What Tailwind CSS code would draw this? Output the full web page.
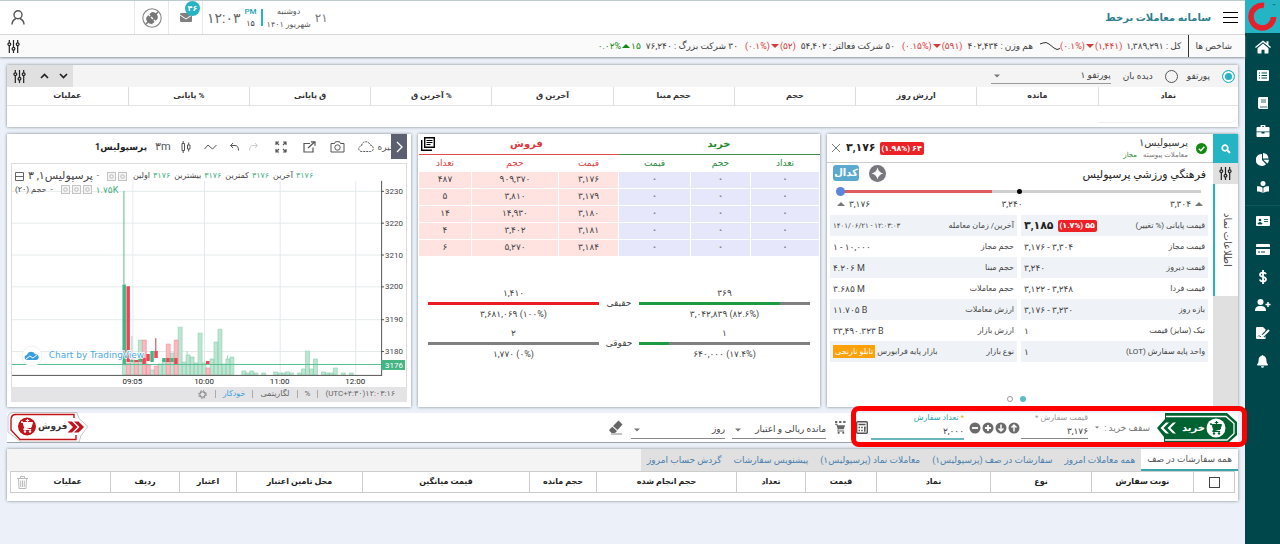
<!DOCTYPE html>
<html lang="fa" dir="rtl">
<head>
<meta charset="utf-8">
<title>سامانه معاملات برخط</title>
<script src="https://cdn.jsdelivr.net/npm/@tailwindcss/browser@4"></script>
</head>
<body class="min-h-screen flex bg-[#ecf1f9] text-[#444] text-[10px] leading-4 overflow-hidden [font-family:Roboto,'DejaVu_Sans',sans-serif]">

<svg class="hidden">
  <symbol id="sliders" viewBox="0 0 14 14"><g fill="none" stroke="currentColor" stroke-width="1.3"><path d="M2.5 0v3M2.5 6v8M7 0v8M7 11v3M11.500 0v3M11.500 6v8"/><circle cx="2.500" cy="4.500" r="1.500"/><circle cx="7" cy="9.500" r="1.500"/><circle cx="11.500" cy="4.500" r="1.500"/></g></symbol>
  <symbol id="down" viewBox="0 0 8 4"><path d="M0 0h8L4 4z" fill="currentColor"/></symbol>
  <symbol id="up" viewBox="0 0 8 4"><path d="M0 4h8L4 0z" fill="currentColor"/></symbol>
  <symbol id="cart" viewBox="0 0 14 14"><path d="M1 3h2l1.500 5.500h6.500l1.500-5H3.500zM4.500 8.500l-.8 2h7.500" fill="currentColor" stroke="currentColor" stroke-width="1"/><circle cx="5" cy="12.500" r="1.200" fill="currentColor"/><circle cx="10" cy="12.500" r="1.200" fill="currentColor"/><path d="M7.500 0v3M5.800 1.500h3.400" fill="none" stroke="currentColor" stroke-width="1.200"/></symbol>
  <symbol id="chip" viewBox="0 0 9 9"><rect x=".5" y=".5" width="8" height="8" fill="#f4f4f4" stroke="#c4c4c4"/><circle cx="4.500" cy="4.500" r="1.800" fill="none" stroke="#bbb"/></symbol>
</svg>

<nav aria-label="منوی اصلی" class="w-[35px] shrink-0 bg-[#00474c] text-white flex flex-col items-center">
  <a href="#" aria-label="خانه کارگزاری" class="w-full h-[33px] bg-[#25b4c4] flex items-center justify-center">
    <svg class="size-[29px]" viewBox="0 0 29 29"><path d="M16 3.500A11.300 11.300 0 1 0 25.600 15" fill="none" stroke="#e5202b" stroke-width="5.500"/><path d="M24 2h4l-2 1.500z" fill="#0b7a86"/></svg>
  </a>
  <a href="#" aria-label="خانه" class="h-[28px] flex items-center"><svg class="w-4 h-[14px]" viewBox="0 0 16 14" fill="currentColor"><path d="M8 3.600 2.500 8.200V13c0 .3.200.5.500.5h3.500V9.700h3v3.800H13c.3 0 .5-.2.500-.5V8.200z"/><path d="M8 .5 0 7l.9 1.100L8 2.300l7.100 5.800L16 7l-2.500-2.100V1.300h-2v2z"/></svg></a>
  <a href="#" aria-label="فهرست" class="h-[28px] flex items-center"><svg class="w-3 h-[11px]" viewBox="0 0 12 11"><rect width="12" height="11" rx="1" fill="#fff"/><path d="M2 3h1M2 5.500h1M2 8h1M4.500 3H10M4.500 5.500H10M4.500 8H10" stroke="#00474c"/></svg></a>
  <a href="#" aria-label="دفتر" class="h-[28px] flex items-center"><svg class="w-3 h-3" viewBox="0 0 12 12"><path d="M2.500 0H11v9.500l-.3.500.3 2H2.500A1.800 1.800 0 0 1 1 10V1.700A1.700 1.700 0 0 1 2.500 0z" fill="#fff"/><path d="M3 10h7M4 3h5M4 5h5" stroke="#00474c" stroke-width=".8"/></svg></a>
  <a href="#" aria-label="پرتفوی" class="h-[28px] flex items-center"><svg class="w-[14px] h-3" viewBox="0 0 14 12"><path d="M4.500 2V.8c0-.4.300-.8.800-.8h3.400c.5 0 .8.400.8.800V2h3c.6 0 1 .5 1 1v3.500H.5V3c0-.5.400-1 1-1zM6 2h2V1.300H6zM.5 7.300H5.500V8.500h3V7.300h5V11c0 .6-.4 1-1 1h-11c-.6 0-1-.4-1-1z" fill="#fff" fill-rule="evenodd"/></svg></a>
  <a href="#" aria-label="نمودار" class="h-[28px] flex items-center"><svg class="size-[13px]" viewBox="0 0 13 13" fill="#fff"><path d="M6 1v6l4 4.200A6 6 0 1 1 6 1z"/><path d="M7 0a6 6 0 0 1 5.500 5.500H7zM7.300 6.800H13a6 6 0 0 1-1.700 3.800z"/></svg></a>
  <a href="#" aria-label="آموزش" class="h-[28px] flex items-center"><svg class="size-3" viewBox="0 0 12 12" fill="#fff"><circle cx="6" cy="2.500" r="2.500"/><path d="M0 5.200c2.200 0 4 .4 5.600 1.500V12C4 11 2.200 10.600 0 10.600zM12 5.200c-2.200 0-4 .4-5.600 1.500V12C8 11 9.800 10.600 12 10.600z"/></svg></a>
  <hr class="w-full border-[#0b5a5f] mt-1 mb-px">
  <a href="#" aria-label="کارت شناسایی" class="h-[28px] flex items-center"><svg class="w-[14px] h-[10px]" viewBox="0 0 14 10"><rect width="14" height="10" rx="1" fill="#fff"/><circle cx="4" cy="4" r="1.300" fill="#00474c"/><path d="M2 8c0-2 4-2 4 0zM8 3.500h4M8 5.500h4" fill="#00474c" stroke="#00474c" stroke-width=".8"/></svg></a>
  <a href="#" aria-label="پرداخت" class="h-[28px] flex items-center"><svg class="w-[14px] h-[11px]" viewBox="0 0 14 11"><rect width="14" height="11" rx="1" fill="#fff"/><path d="M0 4h14" stroke="#00474c" stroke-width="2"/><path d="M2 8h2M5 8h4" stroke="#00474c"/></svg></a>
  <a href="#" aria-label="مالی" class="h-[28px] flex items-center"><svg class="w-2 h-[14px]" viewBox="0 0 8 14" fill="none" stroke="#fff" stroke-width="1.800"><path d="M4 0v14M7 4.200C6.500 3 5.500 2.600 4 2.600 2.300 2.600 1 3.300 1 4.700 1 7.700 7 6 7 9.200c0 1.500-1.300 2.200-3 2.200S1.200 10.800.8 9.500"/></svg></a>
  <a href="#" aria-label="کاربر جدید" class="h-[28px] flex items-center"><svg class="w-4 h-3" viewBox="0 0 16 12" fill="#fff"><circle cx="5.500" cy="3" r="3"/><path d="M0 12c0-3.500 1.500-5 5.500-5S11 8.500 11 12z"/><path d="M13 3v5M10.500 5.500h5" stroke="#fff" stroke-width="1.500"/></svg></a>
  <a href="#" aria-label="قرارداد" class="h-[28px] flex items-center"><svg class="w-[14px] h-3" viewBox="0 0 14 12"><path d="M1 0h6l2.500 2.500V12H1a1 1 0 0 1-1-1V1a1 1 0 0 1 1-1z" fill="#fff"/><path d="M12.800 3.200 7 9" stroke="#00474c" stroke-width="4"/><path d="M13 3 7.500 8.500 5.500 9" stroke="#fff" stroke-width="2" fill="none"/><path d="M2 9.500l1-1 1 1.200 1-.5" stroke="#00474c" fill="none" stroke-width=".8"/></svg></a>
  <a href="#" aria-label="اعلان" class="h-[28px] flex items-center"><svg class="w-[11px] h-[13px]" viewBox="0 0 11 13" fill="#fff"><path d="M5.500 0c.5 0 .8.300.8.800C8.300 1.200 9.400 2.700 9.400 5c0 2.500.6 3.300 1.400 4.200.4.500 0 1.300-.6 1.300H.8c-.6 0-1-.8-.6-1.300C1 8.300 1.600 7.500 1.600 5c0-2.300 1.100-3.800 3.100-4.200 0-.5.300-.8.800-.8zM4 11.300h3a1.500 1.500 0 0 1-3 0z"/></svg></a>
</nav>

<div class="flex-1 min-w-0 flex flex-col">

  <header class="h-[35px] bg-white border-t border-t-[#bccccc] border-b border-b-[#ddd] flex items-center ps-[7px]">
    <button type="button" aria-label="منو" class="w-[15px] h-[11px] flex flex-col justify-between"><span class="h-px w-full bg-black"></span><span class="h-px w-full bg-black"></span><span class="h-px w-full bg-black"></span></button>
    <h1 class="ms-3 text-[10px] font-bold text-[#2f7f8c]">سامانه معاملات برخط</h1>
    <div class="ms-auto flex items-center h-full whitespace-nowrap">
      <span class="text-[12px] text-[#777]">۲۱</span>
      <div class="ms-1 text-center text-[8px] leading-[13px] text-[#555]"><div>دوشنبه</div><div>شهریور ۱۴۰۱</div></div>
      <span class="w-[2px] h-[17px] bg-[#25b4c4] ms-[4px]"></span>
      <div class="ms-[4px] text-center text-[8px] leading-[12px]"><div class="text-[#1fa3b3] font-medium">PM</div><div>۱۵</div></div>
      <time class="mr-1 text-[14px] text-[#666]" dir="ltr">۱۲:۰۳</time>
      <button type="button" aria-label="پیام‌ها" class="relative ms-1 w-[35px] h-full border-x border-[#e8e8e8] flex items-center justify-center">
        <svg class="w-[12px] h-[9px]" viewBox="0 0 12 9"><rect width="12" height="9" rx="1" fill="#808080"/><path d="M0 2l6 4 6-4" stroke="#fff" fill="none"/></svg>
        <span class="absolute top-0 left-[16px] size-[15px] rounded-full bg-[#25b4c4] text-white text-[8px] leading-[15px] font-bold text-center">۴۶</span>
      </button>
      <button type="button" aria-label="اتصال" class="w-[34px] h-full border-l border-[#e8e8e8] flex items-center justify-center">
        <svg class="size-5" viewBox="0 0 20 20"><circle cx="10" cy="10" r="9.200" fill="none" stroke="#888" stroke-width="1.100"/><g transform="rotate(45 10 10)"><path d="M5.500 9.300V7.500C5.500 5 7.800 4 10 4s4.500 1 4.500 3.500v1.800zM5.500 10.700v1.800C5.500 15 7.800 16 10 16s4.500-1 4.500-3.500v-1.800z" fill="#777"/><path d="M10 4.500V1.500M10 15.500v3M8 9v2M12 9v2" stroke="#777" stroke-width="1.500"/></g></svg>
      </button>
      <button type="button" aria-label="حساب کاربری" class="ms-[109px] me-[11px]"><svg class="w-[14px] h-[15px]" viewBox="0 0 14 15" fill="none" stroke="#555" stroke-width="1.400"><circle cx="7" cy="4.800" r="4"/><path d="M1 14.500c0-3.500 1.800-5 4-6M13 14.500c0-3.500-1.800-5-4-6"/></svg></button>
    </div>
  </header>

  <section aria-label="شاخص‌ها" class="h-[22px] bg-[#fafafa] shadow-[0_1px_2px_#8a9499] flex items-center ps-[13px] pe-[7px] text-[9px] whitespace-nowrap relative">
    <span>شاخص ها</span>
    <span class="ms-[6px] w-px h-full bg-[#333]"></span>
    <span class="ms-[7px]">کل : ۱,۳۸۹,۲۹۱</span>
    <span class="mr-[4px] flex items-center text-[#d23b3b] gap-px" dir="ltr">(۰.۱%)<svg class="w-2 h-1"><use href="#down"/></svg>(۱,۴۴۱)</span>
    <svg class="w-[20px] h-[10px] shrink-0" viewBox="0 0 20 10" fill="none" stroke="#333"><path d="M0 3l3-1 3-.500 3 1.500 5 4 3 1.500 3-1"/></svg>
    <span class="ms-[7px]">هم وزن : ۴۰۲,۴۳۴</span>
    <span class="mr-[5px] flex items-center text-[#d23b3b] gap-px" dir="ltr">(۰.۱۵%)<svg class="w-2 h-1"><use href="#down"/></svg>(۵۹۱)</span>
    <span class="ms-[7px]">۵۰ شرکت فعالتر : ۵۴,۴۰۲</span>
    <span class="mr-[5px] flex items-center text-[#d23b3b] gap-px" dir="ltr">(۰.۱%)<svg class="w-2 h-1"><use href="#down"/></svg>(۵۲)</span>
    <span class="ms-[7px]">۳۰ شرکت بزرگ : ۷۶,۲۴۰</span>
    <span class="mr-[5px] flex items-center text-[#0f8a0f] gap-px" dir="ltr">۰.۰۲%<svg class="w-2 h-1"><use href="#up"/></svg>۱۵</span>
    <button type="button" aria-label="تنظیمات" class="ms-auto text-[#222]"><svg class="w-[13px] h-[13px]"><use href="#sliders"/></svg></button>
  </section>

  <main class="ps-[7px] pe-[7px] pt-2 flex flex-col">

    <section class="bg-white shadow-[0_0_3px_#7d878c] h-[62px]">
      <div class="h-[22px] bg-[#f4f4f4] flex items-center ps-[3px]">
        <label class="flex items-center text-[9px]"><input type="radio" name="src" checked class="appearance-none size-[13px] rounded-full border-[1px] border-[#25b4c4] bg-[#25b4c4] shadow-[inset_0_0_0_2px_#fff] me-3">پورتفو</label>
        <label class="ms-[9px] flex items-center text-[9px]"><input type="radio" name="src" class="appearance-none size-[13px] rounded-full border border-[#555] me-3">دیده بان</label>
        <div class="ms-[12px] relative w-[120px]">
          <select aria-label="انتخاب پورتفو" class="appearance-none block w-full h-4 border-b border-[#999] bg-transparent text-[9px] leading-[15px] outline-none"><option>پورتفو ۱</option></select>
          <svg class="absolute left-[3px] top-[6px] w-[6px] h-1 text-[#777]"><use href="#down"/></svg></div>
        <div class="ms-auto h-full w-[66px] bg-[#e0e0e0] flex items-center text-[#222]">
          <button type="button" aria-label="پایین" class="ms-[5px]"><svg class="w-[9px] h-[6px]" viewBox="0 0 9 6" fill="none" stroke="currentColor" stroke-width="1.700"><path d="M1 1l3.500 3.500L8 1"/></svg></button>
          <button type="button" aria-label="بالا" class="ms-[10px]"><svg class="w-[9px] h-[6px]" viewBox="0 0 9 6" fill="none" stroke="currentColor" stroke-width="1.700"><path d="M1 5l3.500-3.500L8 5"/></svg></button>
          <button type="button" aria-label="تنظیمات" class="ms-auto me-[6px]"><svg class="size-[13px]"><use href="#sliders"/></svg></button>
        </div>
      </div>
      <table class="w-full table-fixed text-[8px] text-[#333]">
        <colgroup><col class="w-[140px]"><col><col><col><col><col><col><col><col><col></colgroup>
        <thead><tr class="h-[18px] border-b border-[#e4e4e4] [&>th+th]:border-r [&>th+th]:border-[#ddd] [&>th]:p-0 [&>th]:leading-4">
          <th>نماد</th><th>مانده</th><th>ارزش روز</th><th>حجم</th><th>حجم مبنا</th><th>آخرین ق</th><th>% آخرین ق</th><th>ق پایانی</th><th>% پایانی</th><th>عملیات</th></tr></thead>
        <tbody><tr><td colspan="10"><div class="h-[17px] border-b border-[#eee] rounded-r-full w-[140px]"></div></td></tr></tbody>
      </table>
    </section>

    <div class="flex gap-[7px] mt-[7px] h-[273px]">

      <section class="w-[411px] shrink-0 bg-white shadow-[0_0_3px_#7d878c] flex">
        <div class="w-[25px] bg-[#e0e0e0] flex flex-col">
          <button type="button" aria-label="جستجو" class="h-[29px] bg-[#25b4c4] flex items-center justify-center"><svg class="size-[10px]" viewBox="0 0 10 10" fill="none" stroke="#fff"><circle cx="4" cy="4" r="2.800" stroke-width="1.700"/><path d="M6 6l3 3" stroke-width="2"/></svg></button>
          <button type="button" aria-label="تنظیمات" class="h-[21px] flex items-center justify-center text-[#222]"><svg class="size-[13px]"><use href="#sliders"/></svg></button>
          <button type="button" class="h-[112px] bg-white border-l-2 border-[#25b4c4] flex items-center justify-center"><span class="[writing-mode:vertical-rl] text-[10px] whitespace-nowrap">اطلاعات نماد</span></button>
        </div>
        <div class="flex-1 min-w-0 flex flex-col">
          <div class="h-[29px] border-b border-[#ccc] flex items-center ps-[6px] pe-[5px]">
            <svg class="size-[11px]" viewBox="0 0 11 11"><circle cx="5.500" cy="5.500" r="5.500" fill="#0f8a0f"/><path d="M2.800 5.700l2 2 3.500-4" fill="none" stroke="#fff" stroke-width="1.400"/></svg>
            <div class="ms-2"><div class="text-[10px] leading-[14px] text-[#333]">پرسپولیس۱</div><div class="text-[7px] leading-[10px] text-[#777] flex gap-[6px]"><span>معاملات پیوسته</span><span class="text-[#2b8a2b]">مجاز</span></div></div>
            <span class="mr-auto bg-[#ec2227] text-white font-bold text-[8px] leading-[13px] rounded-[2px] px-[2px]" dir="ltr">(۱.۹۸%) ۶۴</span>
            <strong class="ms-1 text-[11px] text-[#222]">۳,۱۷۶</strong>
            <button type="button" aria-label="بستن" class="ms-[6px]"><svg class="size-2" viewBox="0 0 8 8" stroke="#777"><path d="M0 0l8 8M8 0L0 8"/></svg></button>
          </div>
          <div class="h-[24px] flex items-center ps-[7px] pe-[6px]">
            <h2 class="text-[11px] text-[#222]">فرهنگي ورزشي پرسپوليس</h2>
            <svg class="ms-auto size-[17px] mb-1" viewBox="0 0 17 17"><circle cx="8.500" cy="8.500" r="8.500" fill="#77777d"/><path d="M8.500 2.500c.8 3.500 2.500 5.200 6 6-3.500.8-5.200 2.500-6 6-.8-3.500-2.500-5.200-6-6 3.500-.8 5.200-2.500 6-6z" fill="#fff"/></svg>
            <a href="#" class="ms-[10px] mb-1 w-[26px] h-4 rounded-[3px] bg-[#5ba9cf] text-white font-bold text-[10px] leading-[15px] text-center">کدال</a>
          </div>
          <div class="ps-[14px] pe-[12px] mt-[3px]" dir="ltr">
            <div class="relative h-[3px] bg-[#d0d0d0] flex">
              <div class="bg-[#dd5c5c]" style="width:42%"></div>
              <span class="absolute -left-[5px] -top-[3px] size-[9px] rounded-full bg-[#5b86dd]"></span>
              <span class="absolute left-[49%] -top-px size-[5px] rounded-full bg-black"></span>
            </div>
          </div>
          <div class="flex justify-between items-center px-[10px] mt-[3px] text-[9px]">
            <span class="flex items-center gap-1"><svg class="w-2 h-1 text-[#777]"><use href="#up"/></svg>۳,۳۰۴</span><span class="pr-4">۳,۲۴۰</span><span class="flex items-center gap-1">۳,۱۷۶<svg class="w-2 h-1 text-[#777]"><use href="#up"/></svg></span>
          </div>
          <dl class="grid grid-cols-2 gap-x-1 ps-[5px] pe-[3px] mt-[3px] text-[8px] [&>div]:h-[21px] [&>div]:flex [&>div]:items-center [&>div]:justify-between [&>div]:px-[3px] [&>div]:whitespace-nowrap">
            <div class="bg-[#eff3f7]"><dt>قیمت پایانی (% تغییر)</dt><dd class="flex items-center gap-1"><span class="bg-[#ec2227] text-white font-bold leading-3 rounded-[2px] px-[2px]" dir="ltr">(۱.۷%) ۵۵</span><strong class="text-[11px] text-[#222]">۳,۱۸۵</strong></dd></div>
            <div class="bg-[#eff3f7]"><dt>آخرین/ زمان معامله</dt><dd dir="ltr" class="text-[7px]">۱۴۰۱/۰۶/۲۱ - ۱۲:۰۳:۰۳</dd></div>
            <div><dt>قیمت مجاز</dt><dd dir="ltr" class="text-[9px]">۳,۱۷۶ - ۳,۳۰۴</dd></div>
            <div><dt>حجم مجاز</dt><dd dir="ltr" class="text-[9px]">۱ - ۱۰,۰۰۰</dd></div>
            <div class="bg-[#eff3f7]"><dt>قیمت دیروز</dt><dd class="text-[9px]">۳,۲۴۰</dd></div>
            <div class="bg-[#eff3f7]"><dt>حجم مبنا</dt><dd dir="ltr" class="text-[9px]">۴.۲۰۶ M</dd></div>
            <div><dt>قیمت فردا</dt><dd dir="ltr" class="text-[9px]">۳,۱۲۲ - ۳,۲۴۸</dd></div>
            <div><dt>حجم معاملات</dt><dd dir="ltr" class="text-[9px]">۳.۶۸۵ M</dd></div>
            <div class="bg-[#eff3f7]"><dt>بازه روز</dt><dd dir="ltr" class="text-[9px]">۳,۱۷۶ - ۳,۲۳۰</dd></div>
            <div class="bg-[#eff3f7]"><dt>ارزش معاملات</dt><dd dir="ltr" class="text-[9px]">۱۱.۷۰۵ B</dd></div>
            <div><dt>تیک (سایز) قیمت</dt><dd class="text-[9px]">۱</dd></div>
            <div><dt>ارزش بازار</dt><dd dir="ltr" class="text-[9px]">۳۳,۴۹۰.۳۲۳ B</dd></div>
            <div class="bg-[#eff3f7]"><dt>واحد پایه سفارش (LOT)</dt><dd class="text-[9px]">۱</dd></div>
            <div class="bg-[#eff3f7]"><dt>نوع بازار</dt><dd class="flex items-center gap-[2px]">بازار پایه فرابورس<span class="bg-[#ffa20a] text-white leading-[13px] px-[2px]">تابلو نارنجی</span></dd></div>
          </dl>
          <div class="mt-auto mb-[5px] pr-[7px] flex justify-center gap-[7px]"><button type="button" aria-label="صفحه ۱" class="size-[6px] rounded-full bg-[#5dbcc6]"></button><button type="button" aria-label="صفحه ۲" class="size-[6px] rounded-full border border-[#999]"></button></div>
        </div>
      </section>

      <section class="w-[402px] shrink-0 bg-white shadow-[0_0_3px_#7d878c] relative">
        <button type="button" aria-label="عمق بازار" class="absolute left-[3px] top-[3px]"><svg class="size-[14px]" viewBox="0 0 14 14" fill="none" stroke="#000"><path d="M3.700.7h9.600v9.600H3.700z" stroke-width="1.400"/><path d="M.7 3v10.300H11" stroke-width="1.400"/><path d="M5.500 3.500h6M5.500 5.500h6M5.500 7.500h4"/></svg></button>
        <table class="w-full table-fixed text-[9px] text-center text-[#444] [&_td]:p-0 [&_th]:py-0">
          <colgroup><col class="w-[69px]"><col class="w-[60px]"><col class="w-[72px]"><col class="w-[60px]"><col class="w-[87px]"><col></colgroup>
          <thead>
            <tr class="h-[20px] text-[10px] leading-[18px]"><th colspan="3" class="text-[#1f8a2a] border-b border-[#3d8f4d]">خرید</th><th colspan="3" class="text-[#e3343a] border-b border-[#e05050] pl-4">فروش</th></tr>
            <tr class="h-[17px] leading-4 [&>th]:font-normal"><th class="text-[#2b8a3a]">تعداد</th><th class="text-[#2b8a3a]">حجم</th><th class="text-[#2b8a3a]">قیمت</th><th class="text-[#d64545]">قیمت</th><th class="text-[#d64545]">حجم</th><th class="text-[#d64545]">تعداد</th></tr>
          </thead>
          <tbody class="[&>tr]:h-[17px] [&_td]:leading-[15px] [&_td]:border [&_td]:border-white [&_td:nth-child(-n+3)]:bg-[#e6e7fa] [&_td:nth-child(-n+3)]:text-[#888] [&_td:nth-child(-n+3)]:font-bold [&_td:nth-child(n+4)]:bg-[#ffe3e1]">
            <tr><td>۰</td><td>۰</td><td>۰</td><td>۳,۱۷۶</td><td>۹۰۹,۳۷۰</td><td>۴۸۷</td></tr>
            <tr><td>۰</td><td>۰</td><td>۰</td><td>۳,۱۷۹</td><td>۳,۸۱۰</td><td>۵</td></tr>
            <tr><td>۰</td><td>۰</td><td>۰</td><td>۳,۱۸۰</td><td>۱۴,۹۳۰</td><td>۱۴</td></tr>
            <tr><td>۰</td><td>۰</td><td>۰</td><td>۳,۱۸۱</td><td>۳,۴۰۲</td><td>۴</td></tr>
            <tr><td>۰</td><td>۰</td><td>۰</td><td>۳,۱۸۴</td><td>۵,۲۷۰</td><td>۶</td></tr>
          </tbody>
        </table>
        <div class="grid grid-cols-[1fr_40px_1fr] px-[10px] mt-[29px] text-center text-[9px] leading-[14px] items-center gap-y-[5px]">
          <div><div>۳۶۹</div><div class="h-[3px] my-[2px] bg-[#808080] flex justify-end"><div class="bg-[#1c9b42]" style="width:82.6%"></div></div><div dir="ltr">۳,۰۴۲,۸۳۹ (۸۲.۶%)</div></div>
          <div>حقیقی</div>
          <div><div>۱,۴۱۰</div><div class="h-[3px] my-[2px] bg-[#ec1c24]"></div><div dir="ltr">۳,۶۸۱,۰۶۹ (۱۰۰%)</div></div>
          <div><div>۱</div><div class="h-[3px] my-[2px] bg-[#808080] flex justify-end"><div class="bg-[#1c9b42]" style="width:17.4%"></div></div><div dir="ltr">۶۴۰,۰۰۰ (۱۷.۴%)</div></div>
          <div>حقوقی</div>
          <div><div>۲</div><div class="h-[3px] my-[2px] bg-[#808080]"></div><div dir="ltr">۱,۷۷۰ (۰%)</div></div>
        </div>
      </section>

      <section class="flex-1 min-w-0 bg-white shadow-[0_0_3px_#7d878c] px-1 flex flex-col" dir="ltr">
        <div class="h-[29px] pb-1 flex items-center text-[#555] relative">
          <strong class="ms-[84px] w-[52px] text-[9px] text-[#222] whitespace-nowrap">پرسپولیس1</strong>
          <span class="ms-2 text-[11px]">۳m</span>
          <svg class="ms-[10px] w-[10px] h-3" viewBox="0 0 10 12" fill="none" stroke="currentColor"><path d="M1 2.500h2.500v7H1zM2.200 0v2.500M2.200 9.500V12M6.500 4H9v4H6.500zM7.700 1.500V4M7.700 8v2.500"/></svg>
          <svg class="ms-[13px] w-[13px] h-[6px]" viewBox="0 0 13 6" fill="none" stroke="currentColor"><path d="M.5 5L4 1l4.500 4L12.500 1"/></svg>
          <svg class="ms-[13px] w-[9px] h-2" viewBox="0 0 9 8" fill="none" stroke="currentColor"><path d="M3 0L.7 2.500 3 5M.7 2.500H5q3.500 0 3.500 5"/></svg>
          <svg class="ms-[10px] w-[9px] h-2 text-[#ccc]" viewBox="0 0 9 8" fill="none" stroke="currentColor"><path d="M6 0l2.300 2.500L6 5M8.300 2.500H4Q.5 2.500.5 7.500"/></svg>
          <svg class="ms-[17px] w-3 h-3" viewBox="0 0 12 12" fill="none" stroke="currentColor" stroke-width="1.200"><path d="M1 4V1h3M1 1l3 3M8 1h3v3M11 1L8 4M1 8v3h3M1 11l3-3M8 11h3V8M11 11L8 8"/></svg>
          <svg class="ms-[16px] w-[13px] h-3" viewBox="0 0 13 12" fill="none" stroke="currentColor" stroke-width="1.200"><path d="M7 2.500H1v8.500h9V6.500M5 7l6.500-6M8 .8h4v4"/></svg>
          <svg class="ms-[14px] w-[15px] h-3" viewBox="0 0 15 12" fill="none" stroke="currentColor"><path d="M1 2.500h3.500L5.500.700h4l1 1.800H14V11H1z"/><circle cx="7.500" cy="6.500" r="2.700"/></svg>
          <svg class="ms-[13px] w-4 h-[11px]" viewBox="0 0 16 11" fill="none" stroke="currentColor" stroke-dasharray="2 1"><path d="M4 10.500C-.5 10.500 0 5 3.500 5 4-.500 11-.500 12 4c4 0 4.500 6.500.500 6.500z"/></svg>
          <span class="ms-1 text-[9px]">ذخیره</span>
          <button type="button" aria-label="بعدی" class="absolute right-0 top-0 w-4 h-[25px] bg-[#5b5f70] flex items-center justify-center"><svg class="w-[7px] h-3" viewBox="0 0 7 12" fill="none" stroke="#fff" stroke-width="1.300"><path d="M1 1l5 5-5 5"/></svg></button>
        </div>
        <div class="relative border-t border-x border-[#ddd]">
          <svg class="w-full block" viewBox="11 163 396 224" font-family="Roboto" font-size="8" fill="#444">
            <path d="M132.500 180V375M204.500 180V375M280.500 180V375M356.500 180V375M11 190.500H382M11 222.500H382M11 254.500H382M11 286.500H382M11 319.500H382M11 351.500H382" stroke="#e4eaec"/>
            <path d="M124.500 314V351M131.500 336V375M155.500 339V352M217 350V363M187 351V360M227.500 355V362" stroke="#9fd8c0"/>
            <g fill="#bde6d2" stroke="#8ccfb0" stroke-width=".6">
              <path d="M122 365h4v10h-4zM130 360h4v15h-4zM138 340h4v35h-4zM150 370h4v5h-4zM158 364h4v11h-4zM162 360h4v15h-4zM170 353h4v22h-4zM178 327h4v48h-4zM182 362h4v13h-4zM186 355h4v20h-4zM190 357h4v18h-4zM194 363h4v12h-4zM198 333h4v42h-4zM202 363h4v12h-4zM210 359h4v16h-4zM214 342h4v33h-4zM218 329h4v46h-4zM222 364h4v11h-4zM226 359h4v16h-4zM230 357h4v18h-4z"/>
              <path d="M242 371h4v4h-4zM246 373h4v2h-4zM250 371h4v4h-4zM254 373h4v2h-4zM262 373h4v2h-4zM274 372h4v3h-4zM278 373h4v2h-4zM282 373h4v2h-4zM286 372h4v3h-4zM290 373h4v2h-4zM298 373h4v2h-4zM302 369h4v6h-4zM306 351h4v24h-4zM310 369h4v6h-4zM314 359h4v16h-4zM322 372h4v3h-4zM326 373h4v2h-4zM330 373h4v2h-4zM334 368h4v7h-4zM342 373h4v2h-4zM350 373h4v2h-4z"/>
            </g>
            <path fill="#fbb9c1" stroke="#f08f9b" stroke-width=".6" d="M126 363h4v12h-4zM134 361h4v14h-4zM142 340h4v35h-4zM146 365h4v10h-4zM154 366h4v9h-4zM166 344h4v31h-4zM174 340h4v35h-4zM206 368h4v7h-4z"/>
            <path d="M11 364.500H382M123.500 190V284" stroke="#56bd90"/>
            <path d="M155.500 338V352" stroke="#e84c5b"/>
            <path fill="#45b584" d="M122 284h3.500v80H122zM150 351h3.500v11H150zM162 358h3.500v4H162zM170 358h3.500v4H170zM130 360h3v2h-3zM138 358h4v4h-4z"/>
            <path fill="#ec4556" d="M126 286h3.500v76H126zM134 360h4v2h-4zM142 358h3.500v6H142zM146 354h3.500v7H146zM154 351h3.500v7H154zM166 358h3.500v4H166zM174 358h3.500v6H174zM206 361h3.500v3H206z"/>
            <path d="M382.500 180V375.500M11 375.500H383M382 190.500h3M382 222.500h3M382 254.500h3M382 286.500h3M382 319.500h3M382 351.500h3" stroke="#555"/>
            <path d="M382 360h24v10h-24z" fill="#45b584"/>
            <g><text x="386" y="193">3230</text><text x="386" y="225">3220</text><text x="386" y="257">3210</text><text x="386" y="289">3200</text><text x="386" y="322">3190</text><text x="386" y="354">3180</text><text x="386" y="368" fill="#fff">3176</text></g>
            <g text-anchor="middle" fill="#222"><text x="132" y="384">09:05</text><text x="204" y="384">10:00</text><text x="280" y="384">11:00</text><text x="356" y="384">12:00</text></g>
            <circle cx="31" cy="356" r="10" fill="#fff" stroke="#f0f0f0"/><path d="M27 360c-4.500 0-4-5-1-5 1-4 6-4.500 8-1 5 0 5 6 1 6z" fill="#3a9ee0"/><path d="M25 359l4-3 3 2 4-3" stroke="#fff" fill="none"/>
            <text x="48" y="358" font-size="9" font-family="DejaVu Sans" fill="#4aa8e4" stroke="#fff" stroke-width="1.500" paint-order="stroke">Chart by TradingView</text>
          </svg>
          <div class="absolute left-[3px] top-[4px] text-[8px] whitespace-nowrap">
            <div class="flex items-center h-4">
              <svg class="size-[9px] me-1" viewBox="0 0 9 9" fill="none" stroke="#666"><path d="M.5.5h8v8h-8zM.5 4.500h8"/></svg>
              <span class="text-[11px]" dir="rtl">پرسپولیس۱, ۳</span><span class="ms-1">-</span>
              <span class="flex gap-[2px] ms-[8px]"><svg class="size-[9px]"><use href="#chip"/></svg><svg class="size-[9px]"><use href="#chip"/></svg></span>
              <span class="flex gap-[4px] ms-[6px]"><span class="flex gap-[3px]"><span>اولین</span><span class="text-[#3fae7f]">۳۱۷۶</span></span><span class="flex gap-[3px]"><span>بیشترین</span><span class="text-[#3fae7f]">۳۱۷۶</span></span><span class="flex gap-[3px]"><span>کمترین</span><span class="text-[#3fae7f]">۳۱۷۶</span></span><span class="flex gap-[3px]"><span>آخرین</span><span class="text-[#3fae7f]">۳۱۷۶</span></span></span>
            </div>
            <div class="flex items-center h-[11px]"><span dir="rtl">حجم (۲۰)</span><span class="ms-1">-</span><span class="flex gap-[2px] ms-2"><svg class="size-[9px]"><use href="#chip"/></svg><svg class="size-[9px]"><use href="#chip"/></svg><svg class="size-[9px]"><use href="#chip"/></svg></span><span class="ms-1 text-[9px] text-[#3fae7f]">۱.۷۵K</span></div>
          </div>
        </div>
        <div class="h-[15px] bg-[#e4e4e6] flex items-center justify-end gap-[7px] pe-3 text-[8px] text-[#666]">
          <button type="button" aria-label="تنظیمات نمودار" class="me-px"><svg class="size-[9px]" viewBox="0 0 9 9" fill="none" stroke="#777"><circle cx="4.500" cy="4.500" r="2.700"/><circle cx="4.500" cy="4.500" r="3.800" stroke-dasharray="1.500 1.500"/></svg></button>
          <span class="w-px h-2 bg-[#aaa]"></span><button type="button" class="text-[#3a9ee0]">خودکار</button>
          <span class="w-px h-2 bg-[#aaa]"></span><button type="button">لگاریتمی</button>
          <span class="w-px h-2 bg-[#aaa]"></span><button type="button">%</button>
          <span class="w-px h-2 bg-[#aaa]"></span><span>(UTC+۴:۳۰)۱۲:۰۳:۱۶</span>
        </div>
      </section>
    </div>

    <form class="relative mt-[6px] h-[30px] bg-white border-b border-[#9aa3a8] flex items-center text-[9px]" onsubmit="return false">
      <button type="submit" class="relative w-[82px] h-[30px] shrink-0 text-white">
        <svg class="w-full h-full" viewBox="0 0 82 30"><path d="M1 15L9 6V0h62l10 9v13l-9 8H8v-6z" fill="#006231"/><path d="M10 3.500h60l8 7v10l-7 6.500H9" fill="none" stroke="#fff" stroke-width="1.300"/><path d="M10 9.500L4.500 15 10 20.500h3L7.500 15 13 9.500zM17 9.500L11.500 15 17 20.500h3L14.500 15 20 9.500z" fill="#fff"/><circle cx="60" cy="15" r="9.500" fill="#fff"/></svg>
        <svg class="absolute right-[15px] top-[8px] size-[14px] text-[#006231]"><use href="#cart"/></svg>
        <span class="absolute right-[33px] top-[7px] text-[10px] font-bold leading-4">خرید</span>
      </button>
      <span class="ms-[6px] text-[#777] whitespace-nowrap w-[46px]">سقف خرید :</span>
      <svg class="w-1 h-[3px] ms-[5px] text-[#777]"><use href="#down"/></svg>
      <label class="ms-[7px] w-[67px] h-full flex flex-col text-[#999] text-[8px] leading-[10px]"><span>قیمت سفارش *</span><input value="۳,۱۷۶" class="w-full h-4 border-b border-[#888] text-[9px] text-[#444] outline-none bg-transparent"></label>
      <div class="ms-px flex gap-px text-[#6b6b6b]">
        <button type="button" aria-label="افزایش قیمت"><svg class="size-3" viewBox="0 0 12 12"><circle cx="6" cy="6" r="5.500" fill="currentColor"/><path d="M6 9.500V3M3.500 5.500L6 3l2.500 2.500" stroke="#fff" stroke-width="1.500" fill="none"/></svg></button>
        <button type="button" aria-label="کاهش قیمت"><svg class="size-3" viewBox="0 0 12 12"><circle cx="6" cy="6" r="5.500" fill="currentColor"/><path d="M6 2.500V9M3.500 6.500L6 9l2.500-2.500" stroke="#fff" stroke-width="1.500" fill="none"/></svg></button>
        <button type="button" aria-label="افزایش تعداد"><svg class="size-3" viewBox="0 0 12 12"><circle cx="6" cy="6" r="5.500" fill="currentColor"/><path d="M6 3v6M3 6h6" stroke="#fff" stroke-width="1.800"/></svg></button>
        <button type="button" aria-label="کاهش تعداد"><svg class="size-3" viewBox="0 0 12 12"><circle cx="6" cy="6" r="5.500" fill="currentColor"/><path d="M3 6h6" stroke="#fff" stroke-width="1.800"/></svg></button>
      </div>
      <label class="ms-[5px] w-[93px] h-full flex flex-col text-[#25a3b3] text-[8px] leading-[10px]"><span><span class="text-[#e0b020]">*</span> تعداد سفارش</span><input value="۲,۰۰۰" class="w-full h-[17px] border-b-2 border-[#6bb5bd] text-[9px] text-[#444] outline-none bg-transparent"></label>
      <button type="button" aria-label="ماشین حساب" class="ms-[3px]"><svg class="w-3 h-[13px]" viewBox="0 0 12 13"><rect x=".7" y=".7" width="10.600" height="11.600" rx="1" fill="none" stroke="#555" stroke-width="1.400"/><path d="M2.500 3.500h7M2.500 6.500h1.500M5.200 6.500h1.500M8 6.500h1.500M2.500 9.500h1.500M5.200 9.500h1.500" stroke="#555" stroke-width="1.700"/><path d="M8.800 5.700v5" stroke="#555" stroke-width="1.500"/></svg></button>
      <svg class="ms-[10px] w-[11px] h-[13px]" viewBox="0 0 12 14" fill="#666"><path d="M0 0h2.500v2H0zM4.500 0H7v2H4.500zM9 0h2.500v2H9zM0 3h2.500l.5 1.500h8L9.500 9H4l-.5 1.300H10v1H2.500L3 9 1.500 4H0z"/><circle cx="4" cy="12.800" r="1.200"/><circle cx="9" cy="12.800" r="1.200"/></svg>
      <div class="ms-[9px] mt-1 relative w-[94px]"><select aria-label="محل تامین اعتبار" class="appearance-none block w-full h-[18px] border-b border-[#888] bg-transparent text-[9px] leading-[17px] outline-none"><option>مانده ریالی و اعتبار</option></select><svg class="absolute left-[3px] top-[7px] w-[6px] h-1 text-[#777]"><use href="#down"/></svg></div>
      <div class="ms-[7px] mt-1 relative w-[94px]"><select aria-label="اعتبار سفارش" class="appearance-none block w-full h-[18px] border-b border-[#888] bg-transparent text-[9px] leading-[17px] outline-none"><option>روز</option></select><svg class="absolute left-[3px] top-[7px] w-[6px] h-1 text-[#777]"><use href="#down"/></svg></div>
      <button type="button" aria-label="پاک کردن" class="ms-[8px]"><svg class="w-[14px] h-[15px]" viewBox="0 0 14 15" fill="#666"><path d="M9.500.5l4 4-5 5.500-4.500-4z"/><path d="M3.300 6.800L8 11l-2 2H2.500L.5 11q-.5-.8 0-1.500z"/><path d="M2 14h11" stroke="#888"/></svg></button>
      <button type="button" class="relative ms-auto w-[82px] h-[31px] shrink-0">
        <svg class="w-full h-full" viewBox="0 0 82 31"><path d="M1 4Q2 .5 6 .5h64l2 6 9 8-7 9-2 6.500H14L1 20z" fill="#fff" stroke="#b5b5b5" stroke-width=".8"/><path d="M67 6V2.500H8Q4 3 4 8v10l9 9.500h56V23" fill="none" stroke="#c2131b" stroke-width="1.400"/><path d="M60.500 9.500l5.500 5.500-5.500 5.500h4.500l5.500-5.500L65 9.500zM67 9.500l5.500 5.500-5.500 5.500h4.500L77 15l-5.500-5.500z" fill="#c2131b"/><circle cx="20" cy="14.500" r="9" fill="#c2131b"/></svg>
        <svg class="absolute left-[13px] top-[7px] size-[14px] text-white"><use href="#cart"/></svg>
        <span class="absolute left-[31px] top-[6px] text-[9px] font-bold leading-4 text-[#333]">فروش</span>
      </button>
      <div class="absolute -right-[9px] -top-[7px] w-[396px] h-[41px] rounded-[8px] border-[5px] border-[#ff0000] pointer-events-none"></div>
    </form>

    <section class="mt-[6px] bg-white shadow-[0_0_3px_#7d878c] pb-2">
      <div class="h-[22px] bg-[#f4f4f4] flex text-[9px] text-[#4b7fae] whitespace-nowrap">
        <div role="tablist" class="flex bg-[#e0e0e0] h-full [&>button]:px-[6px]">
          <button type="button" role="tab" aria-selected="true" class="bg-white text-[#555] border-b-2 border-[#3aa5ab]">همه سفارشات در صف</button>
          <button type="button" role="tab">همه معاملات امروز</button>
          <button type="button" role="tab">سفارشات در صف (پرسپولیس۱)</button>
          <button type="button" role="tab">معاملات نماد (پرسپولیس۱)</button>
          <button type="button" role="tab">پیشنویس سفارشات</button>
          <button type="button" role="tab">گردش حساب امروز</button>
        </div>
      </div>
      <div class="px-[3px]">
      <table class="w-full table-fixed text-[8px] text-[#222] border border-[#ccc] [&_th]:border-r [&_th]:border-[#ccc] [&_th]:p-0">
        <colgroup><col class="w-[41px]"><col class="w-[102px]"><col class="w-[101px]"><col class="w-[114px]"><col class="w-[71px]"><col class="w-[69px]"><col class="w-[140px]"><col class="w-[67px]"><col class="w-[167px]"><col class="w-[126px]"><col class="w-[57px]"><col class="w-[69px]"><col></colgroup>
        <thead><tr class="h-[21px]"><th><input type="checkbox" aria-label="انتخاب همه" class="appearance-none block mx-auto size-[11px] border border-[#444]"></th><th>نوبت سفارش</th><th>نوع</th><th>نماد</th><th>قیمت</th><th>تعداد</th><th>حجم انجام شده</th><th>حجم مانده</th><th>قیمت میانگین</th><th>محل تامین اعتبار</th><th>اعتبار</th><th>ردیف</th>
          <th><div class="flex items-center ps-7 pe-[6px] justify-between"><span>عملیات</span><button type="button" aria-label="حذف"><svg class="w-[11px] h-[13px]" viewBox="0 0 11 13" fill="none" stroke="#bbb"><path d="M0 2.500h11M3.500 2V.5h4V2M1.500 3l.5 9.500h7L9.500 3M3.700 4.500v6.500M5.500 4.500v6.500M7.300 4.500v6.500"/></svg></button></div></th></tr></thead>
      </table>
      </div>
    </section>
  </main>
</div>
</body>
</html>
